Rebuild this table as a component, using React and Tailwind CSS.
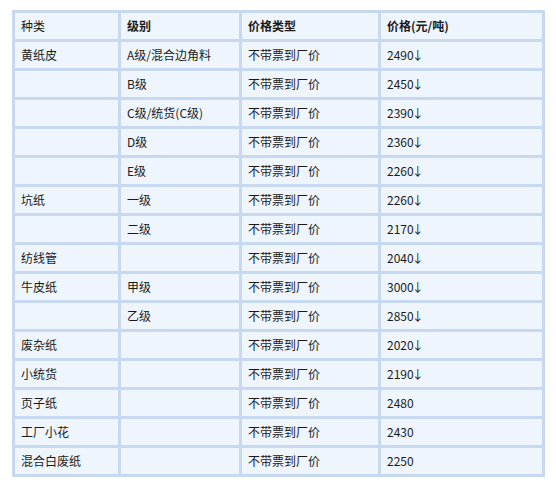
const rows = [
  ["黄纸皮", "A级/混合边角料", "不带票到厂价", "2490↓"],
  ["", "B级", "不带票到厂价", "2450↓"],
  ["", "C级/统货(C级)", "不带票到厂价", "2390↓"],
  ["", "D级", "不带票到厂价", "2360↓"],
  ["", "E级", "不带票到厂价", "2260↓"],
  ["坑纸", "一级", "不带票到厂价", "2260↓"],
  ["", "二级", "不带票到厂价", "2170↓"],
  ["纺线管", "", "不带票到厂价", "2040↓"],
  ["牛皮纸", "甲级", "不带票到厂价", "3000↓"],
  ["", "乙级", "不带票到厂价", "2850↓"],
  ["废杂纸", "", "不带票到厂价", "2020↓"],
  ["小统货", "", "不带票到厂价", "2190↓"],
  ["页子纸", "", "不带票到厂价", "2480"],
  ["工厂小花", "", "不带票到厂价", "2430"],
  ["混合白废纸", "", "不带票到厂价", "2250"],
];

const widths = ["w-[103px]", "w-[118px]", "w-[136px]", "w-[161px]"];

function Cell({ text }) {
  if (text.endsWith("↓")) {
    return (
      <>
        {text.slice(0, -1)}
        <span className="inline-block -ml-[2px]">↓</span>
      </>
    );
  }
  return text;
}

export default function App() {
  return (
    <div
      className="w-[556px] h-[483px] bg-white pt-[10px] pl-[12px]"
      style={{ fontFamily: '"Microsoft YaHei", "Noto Sans CJK SC", "Noto Sans", sans-serif' }}
    >
      <table className="border-separate border-spacing-[3px] bg-[#c6d9f0] table-fixed text-[12px] text-[#1a1a1a]">
        <thead>
          <tr>
            {["种类", "级别", "价格类型", "价格(元/吨)"].map((h, i) => (
              <td
                key={i}
                className={`${widths[i]} h-[26px] bg-[#eef5fd] p-0 pl-[6px] text-left align-middle ${i === 0 ? "font-normal" : "font-bold"}`}
              >
                {h}
              </td>
            ))}
          </tr>
        </thead>
        <tbody>
          {rows.map((r, ri) => (
            <tr key={ri}>
              {r.map((c, ci) => (
                <td key={ci} className={`${widths[ci]} h-[26px] bg-[#eef5fd] p-0 pl-[6px] align-middle`}>
                  <Cell text={c} />
                </td>
              ))}
            </tr>
          ))}
        </tbody>
      </table>
    </div>
  );
}
